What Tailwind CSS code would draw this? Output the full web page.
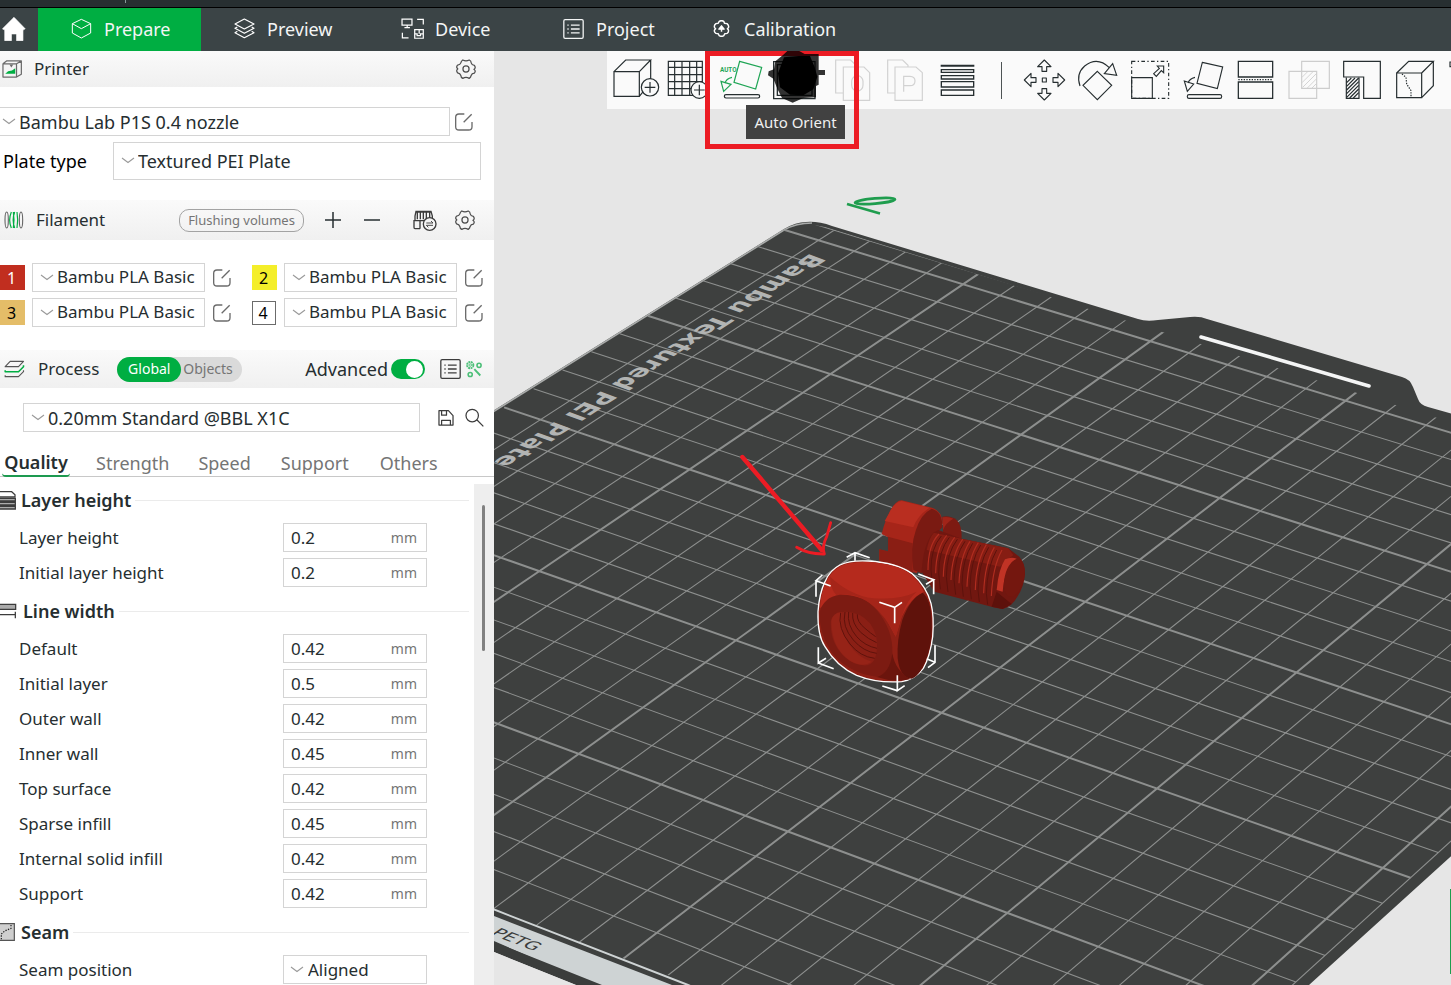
<!DOCTYPE html>
<html lang="en">
<head>
<meta charset="utf-8">
<meta name="viewport" content="width=device-width, initial-scale=1">
<title>Bambu Studio - Prepare</title>
<script src="https://cdn.jsdelivr.net/npm/@tailwindcss/browser@4"></script>
</head>
<body class="h-screen flex flex-col overflow-hidden bg-white font-['Noto_Sans',sans-serif] text-[17px] leading-6 text-[#262e30]">

<svg class="hidden" aria-hidden="true">
  <symbol id="chevron" viewBox="0 0 14 7"><path d="M1 1L7 5.5L13 1" fill="none" stroke="#999" stroke-width="1.1"/></symbol>
  <symbol id="edit" viewBox="0 0 54 54"><path d="M28 3H12Q2 3 2 13V41Q2 51 12 51H41Q51 51 51 41V27M26 28L50 4" fill="none" stroke="#6b6b6b" stroke-width="4"/></symbol>
  <symbol id="gear" viewBox="0 0 62 62"><path d="M21 3Q31 8 41 3Q47 5 47 12Q49 19 57 20Q62 27 57 31Q54 31 57 33Q62 38 57 44Q49 45 47 51Q46 57 41 60Q31 54 21 60Q15 57 15 51Q13 45 5 43Q0 37 4 32Q7 31 4 29Q0 24 5 19Q13 18 15 12Q16 6 21 3Z" fill="none" stroke="#4d4d4d" stroke-width="3.8" stroke-linejoin="round"/><circle cx="31" cy="31" r="9.500" fill="none" stroke="#4d4d4d" stroke-width="3.800"/></symbol>
  <symbol id="list" viewBox="0 0 64 62"><g fill="none" stroke="currentColor" stroke-width="4"><rect x="2" y="2" width="60" height="58" rx="4"/><path d="M24 19H51M24 31H51M24 43H51M13 19H17M13 31H17M13 43H17"/></g></symbol>
</svg>

<header class="shrink-0">
  <div class="h-2 bg-[#272f31] border-b border-black"><div class="ml-[125px] w-px h-[3px] bg-[#899]"></div></div>
  <nav class="h-[43px] bg-[#3b4446] flex text-[18px] text-[#f3f5f5]" aria-label="Main">
    <button class="w-[38px] flex items-center pl-0.5 pb-px" aria-label="Home">
      <svg class="w-6 h-6" viewBox="5 51 72 75"><path d="M41 52L76 88L69 92V125H49V104H33V125H12V92L5 88Z" fill="#fff" stroke="#fff" stroke-width="2" stroke-linejoin="round"/></svg>
    </button>
    <button class="w-[163px] pl-[33px] pb-0.5 flex items-center gap-3 bg-[#00ae42]">
      <svg class="size-[21px]" viewBox="213 57 63 63" fill="none" stroke="#fff" stroke-width="3" stroke-linejoin="round"><path d="M244 61L272 74V102L244 117L217 102V74ZM217 74L244 89L272 74"/></svg>Prepare
    </button>
    <button class="w-[167px] pl-[33px] pb-0.5 flex items-center gap-3">
      <svg class="size-[21px]" viewBox="702 57 63 63" fill="none" stroke="#fff" stroke-width="3.6" stroke-linejoin="round"><path d="M733 60L762 75L733 90L705 75ZM712 84L705 88L733 103L762 88L755 84M712 97L705 101L733 116L762 101L755 97"/></svg>Preview
    </button>
    <button class="w-[162px] pl-[33px] pb-0.5 flex items-center gap-2.5">
      <svg class="w-6 h-[22px]" viewBox="64 57 70 64" fill="none" stroke="#fff" stroke-width="3.6"><path d="M67 60H96V78H67ZM82 78V84M74 85H90M111 61H129V76M68 100V115H86M104 91H129V116H104ZM104 103H111V108H121V103H129M117 91V103"/></svg>Device
    </button>
    <button class="w-[150px] pl-[33px] pb-0.5 flex items-center gap-3">
      <svg class="w-[21px] h-5"><use href="#list"/></svg>Project
    </button>
    <button class="pl-[33px] pb-0.5 flex items-center gap-3.5">
      <svg class="w-[17px] h-[17px]" viewBox="999 62 50 52" fill="none" stroke="#fff" stroke-width="4.4" stroke-linejoin="round"><path d="M1017 66Q1024 62 1031 66L1033 72L1041 73Q1048 79 1045 86L1042 89L1045 92Q1047 100 1041 103L1034 104L1031 110Q1024 114 1017 110L1014 104L1007 103Q1000 98 1003 92L1006 89L1003 86Q1000 78 1007 73L1014 72Z"/><path d="M1024 98V84M1016 90L1024 80L1032 90Z" fill="#fff"/></svg>Calibration
    </button>
  </nav>
</header>

<div class="flex-1 min-h-0 flex">
  <aside class="w-[494px] shrink-0 flex flex-col overflow-hidden bg-white">

    <div class="h-9 shrink-0 flex items-center pl-0.5 pr-[18px] bg-linear-to-b from-[#fafafa] to-[#f0f0f0]">
      <svg class="w-5 h-[18px]" viewBox="5 180 62 54" fill="none" stroke="#6b6b6b" stroke-width="3.8" stroke-linejoin="round"><path d="M8 191H50V232H8ZM8 191L19 182H65L50 191M65 182V223L50 232"/><path d="M28 193H40L34 202Z" fill="#6b6b6b" stroke="none"/><path d="M15 222L24 214L36 212L46 205V222Z" fill="#00ae42" stroke="none"/></svg>
      <h2 class="ml-3">Printer</h2>
      <button class="ml-auto" aria-label="Printer settings"><svg class="size-5"><use href="#gear"/></svg></button>
    </div>

    <div class="pt-5 pb-5 shrink-0 text-[18px]">
      <div class="flex items-center">
        <div class="relative w-[450px]">
          <select aria-label="Printer preset" class="appearance-none block w-full h-[29px] border border-l-0 border-[#d4d4d4] bg-white pl-[19px]"><option>Bambu Lab P1S 0.4 nozzle</option></select>
          <svg class="absolute left-0.5 top-[11px] w-3.5 h-[7px] pointer-events-none"><use href="#chevron"/></svg>
        </div>
        <button class="ml-[5px]" aria-label="Edit printer preset"><svg class="size-[18px]"><use href="#edit"/></svg></button>
      </div>
      <div class="flex items-center mt-1.5 pl-[3px] pr-[13px]">
        <label for="plate" class="w-[110px] text-black">Plate type</label>
        <div class="relative flex-1">
          <select id="plate" class="appearance-none block w-full h-[38px] border border-[#d4d4d4] bg-white pl-6"><option>Textured PEI Plate</option></select>
          <svg class="absolute left-2 top-[15px] w-3.5 h-[7px] pointer-events-none"><use href="#chevron"/></svg>
        </div>
      </div>
    </div>

    <div class="h-10 shrink-0 flex items-center pl-1 pr-[19px] bg-linear-to-b from-[#fafafa] to-[#f0f0f0]">
      <svg class="w-5 h-[18px]" viewBox="12 46 60 54" fill="none"><g stroke="#00ae42" stroke-width="3.600"><path d="M34 49Q24 73 34 97M40 49Q44 73 40 97M44 49Q35 73 44 97M51 49Q55 73 51 97"/></g><g stroke="#666" stroke-width="3.400"><ellipse cx="20" cy="73" rx="5" ry="24"/><ellipse cx="63" cy="73" rx="5" ry="24"/></g></svg>
      <h2 class="ml-3">Filament</h2>
      <button class="ml-auto w-[125px] h-[23px] rounded-[10px] border border-[#a3a3a3] text-[13px] leading-5 text-[#757575]">Flushing volumes</button>
      <button class="ml-[21px]" aria-label="Add filament"><svg class="size-4" viewBox="0 0 16 16" stroke="#262e30" stroke-width="1.500"><path d="M0 8H16M8 0V16"/></svg></button>
      <button class="ml-[23px]" aria-label="Remove filament"><svg class="size-4" viewBox="0 0 16 16" stroke="#262e30" stroke-width="1.500"><path d="M0 8H16"/></svg></button>
      <button class="ml-[33px]" aria-label="Sync filaments"><svg class="w-6 h-[21px]" viewBox="1237 42 72 63" fill="none" stroke="#3c3c3c" stroke-width="4"><path d="M1258 98H1243Q1240 98 1240 94V74H1295V60L1291 46H1246L1243 60V74M1250 50V70M1259 50V70M1268 50V70M1277 50V70M1287 50V70M1247 48H1291M1258 74V98"/><circle cx="1287" cy="84" r="19" fill="#f5f5f5"/><path d="M1277 81H1297L1291 75M1297 88H1277L1283 94" stroke-width="2.800"/></svg></button>
      <button class="ml-[18px]" aria-label="Filament settings"><svg class="size-5"><use href="#gear"/></svg></button>
    </div>

    <div class="pt-[23px] pb-[23px] shrink-0 grid grid-cols-[252px_1fr] gap-y-1.5">
      <div class="flex items-center">
        <button class="size-[25px] pr-0.5 bg-[#c12e1f] text-white text-[16px] leading-6 text-center">1</button>
        <div class="relative ml-[7px] w-[173px]"><select aria-label="Filament 1" class="appearance-none block w-full h-[29px] border border-[#d4d4d4] bg-white pl-6 pb-0.5"><option>Bambu PLA Basic</option></select><svg class="absolute left-2 top-[11px] w-3.5 h-[7px] pointer-events-none"><use href="#chevron"/></svg></div>
        <button class="ml-2" aria-label="Edit filament 1"><svg class="size-[18px]"><use href="#edit"/></svg></button>
      </div>
      <div class="flex items-center">
        <button class="size-[25px] pr-0.5 bg-[#f4ee2a] text-black text-[16px] leading-6 text-center">2</button>
        <div class="relative ml-[7px] w-[173px]"><select aria-label="Filament 2" class="appearance-none block w-full h-[29px] border border-[#d4d4d4] bg-white pl-6 pb-0.5"><option>Bambu PLA Basic</option></select><svg class="absolute left-2 top-[11px] w-3.5 h-[7px] pointer-events-none"><use href="#chevron"/></svg></div>
        <button class="ml-2" aria-label="Edit filament 2"><svg class="size-[18px]"><use href="#edit"/></svg></button>
      </div>
      <div class="flex items-center">
        <button class="size-[25px] pr-0.5 bg-[#e4bd68] text-black text-[16px] leading-6 text-center">3</button>
        <div class="relative ml-[7px] w-[173px]"><select aria-label="Filament 3" class="appearance-none block w-full h-[29px] border border-[#d4d4d4] bg-white pl-6 pb-0.5"><option>Bambu PLA Basic</option></select><svg class="absolute left-2 top-[11px] w-3.5 h-[7px] pointer-events-none"><use href="#chevron"/></svg></div>
        <button class="ml-2" aria-label="Edit filament 3"><svg class="size-[18px]"><use href="#edit"/></svg></button>
      </div>
      <div class="flex items-center">
        <button class="w-6 h-6 mr-px pr-0.5 border border-[#6b6b6b] bg-white text-black text-[16px] leading-5 text-center">4</button>
        <div class="relative ml-[7px] w-[173px]"><select aria-label="Filament 4" class="appearance-none block w-full h-[29px] border border-[#d4d4d4] bg-white pl-6 pb-0.5"><option>Bambu PLA Basic</option></select><svg class="absolute left-2 top-[11px] w-3.5 h-[7px] pointer-events-none"><use href="#chevron"/></svg></div>
        <button class="ml-2" aria-label="Edit filament 4"><svg class="size-[18px]"><use href="#edit"/></svg></button>
      </div>
    </div>

    <div class="h-[38px] shrink-0 flex items-center pl-1 pr-[11px] bg-linear-to-b from-[#fafafa] to-[#f0f0f0]">
      <svg class="w-[21px] h-[18px]" viewBox="12 493 62 54" fill="none" stroke-width="3.400" stroke-linejoin="round"><path d="M30 497H70L55 513H15Z" stroke="#555"/><path d="M15 524V528H55L70 513V509" stroke="#00ae42" stroke-width="4.500"/><path d="M15 539V543H55L70 528V524" stroke="#555"/></svg>
      <h2 class="ml-[13px]">Process</h2>
      <div class="ml-[18px] h-[25px] w-[125px] flex rounded-full bg-[#dadada] text-[14px] leading-6">
        <button class="w-16 rounded-full bg-[#00ae42] text-white">Global</button>
        <button class="flex-1 text-left pl-0.5 text-[#757575]">Objects</button>
      </div>
      <label for="advanced" class="ml-auto text-[18px]">Advanced</label>
      <input id="advanced" type="checkbox" role="switch" checked class="ml-[3px] appearance-none w-[34px] h-5 rounded-full bg-[#a3a3a3] checked:bg-[#00ae42] flex items-center before:block before:size-[17px] before:rounded-full before:bg-white checked:before:ml-[15px]">
      <button class="ml-3.5 text-[#3c3c3c]" aria-label="Compare presets"><svg class="w-[23px] h-5"><use href="#list"/></svg></button>
      <button class="ml-[3px]" aria-label="Setup wizard"><svg class="size-[18px]" viewBox="1396 490 54 57" fill="none" stroke="#4cbf78"><circle cx="1411" cy="506" r="10" stroke-width="6" stroke-dasharray="6 2"/><circle cx="1411" cy="506" r="4" stroke-width="3"/><circle cx="1439" cy="507" r="6.500" stroke-width="5"/><circle cx="1411" cy="536" r="6.500" stroke-width="5"/><path d="M1424 519L1443 539" stroke-width="6"/></svg></button>
    </div>

    <div class="shrink-0 flex items-center pt-[15px] pl-[23px] pr-2.5">
      <div class="relative flex-1"><select aria-label="Process preset" class="appearance-none block w-full h-[29px] border border-[#d4d4d4] bg-white pl-6 text-[18px]"><option>0.20mm Standard @BBL X1C</option></select><svg class="absolute left-2 top-[11px] w-3.5 h-[7px] pointer-events-none"><use href="#chevron"/></svg></div>
      <button class="ml-[18px]" aria-label="Save preset"><svg class="size-4" viewBox="1314 58 49 49" fill="none" stroke="#3c3c3c" stroke-width="3.800" stroke-linejoin="round"><path d="M1317 60H1346L1360 75V104H1317ZM1325 61V74H1340V61M1325 103V90H1352V103"/></svg></button>
      <button class="ml-[11px]" aria-label="Search settings"><svg class="size-[19px]" viewBox="1394 53 58 58" fill="none" stroke="#3c3c3c" stroke-width="3.800"><circle cx="1416" cy="76" r="19"/><path d="M1430 89L1450 109"/></svg></button>
    </div>

    <div class="shrink-0 flex h-[45px] pt-[17px] border-b border-[#c8c8c8] text-[18px] text-[#757575]" role="tablist">
      <button role="tab" aria-selected="true" class="w-[68px] ml-0.5 h-7 border-b-2 border-[#1d9a50] rounded-sm font-semibold text-[#262e30] leading-[27px]">Quality</button>
      <button role="tab" class="ml-[26px] h-7">Strength</button>
      <button role="tab" class="ml-[29px] h-7">Speed</button>
      <button role="tab" class="ml-[30px] h-7">Support</button>
      <button role="tab" class="ml-[31px] h-7">Others</button>
    </div>

    <div class="flex-1 min-h-0 flex">
      <form class="flex-1 pt-[3px] overflow-hidden">
        <fieldset>
          <div class="h-10 flex items-center pr-[5px]">
            <svg class="w-4 h-[19px]" viewBox="0 303 48 57" fill="#ababab" stroke="#3c3c3c" stroke-width="3.800"><path d="M-4 305H35L45 314V321H-4Z" fill="#fff"/><path d="M-4 325H46V333H-4ZM-4 337H46V345H-4ZM-4 349H46V357H-4Z"/></svg>
            <h3 class="ml-[5px] font-semibold text-[18px]">Layer height</h3><div class="ml-1 flex-1 h-px bg-[#ebebeb]"></div>
          </div>
          <div class="h-[35px] flex items-center pl-[19px]"><label for="f1" class="w-[264px]">Layer height</label><div class="w-36 h-[29px] flex items-center border border-[#d4d4d4] pl-[7px] pr-[9px]"><input id="f1" class="flex-1 min-w-0 h-6 outline-none" value="0.2"><span class="text-[14px] text-[#757575]">mm</span></div></div>
          <div class="h-[35px] flex items-center pl-[19px]"><label for="f2" class="w-[264px]">Initial layer height</label><div class="w-36 h-[29px] flex items-center border border-[#d4d4d4] pl-[7px] pr-[9px]"><input id="f2" class="flex-1 min-w-0 h-6 outline-none" value="0.2"><span class="text-[14px] text-[#757575]">mm</span></div></div>
        </fieldset>
        <fieldset>
          <div class="h-[41px] flex items-center pt-px pr-[5px]">
            <svg class="w-[17px] h-4" viewBox="0 640 51 48" fill="#ababab" stroke="#3c3c3c" stroke-width="3.800"><path d="M-4 644H47V659H-4Z"/><path d="M-4 675H46M46 666V686" fill="none"/></svg>
            <h3 class="ml-1.5 font-semibold text-[18px]">Line width</h3><div class="ml-1 flex-1 h-px bg-[#ebebeb]"></div>
          </div>
          <div class="h-[35px] flex items-center pl-[19px]"><label for="f3" class="w-[264px]">Default</label><div class="w-36 h-[29px] flex items-center border border-[#d4d4d4] pl-[7px] pr-[9px]"><input id="f3" class="flex-1 min-w-0 h-6 outline-none" value="0.42"><span class="text-[14px] text-[#757575]">mm</span></div></div>
          <div class="h-[35px] flex items-center pl-[19px]"><label for="f4" class="w-[264px]">Initial layer</label><div class="w-36 h-[29px] flex items-center border border-[#d4d4d4] pl-[7px] pr-[9px]"><input id="f4" class="flex-1 min-w-0 h-6 outline-none" value="0.5"><span class="text-[14px] text-[#757575]">mm</span></div></div>
          <div class="h-[35px] flex items-center pl-[19px]"><label for="f5" class="w-[264px]">Outer wall</label><div class="w-36 h-[29px] flex items-center border border-[#d4d4d4] pl-[7px] pr-[9px]"><input id="f5" class="flex-1 min-w-0 h-6 outline-none" value="0.42"><span class="text-[14px] text-[#757575]">mm</span></div></div>
          <div class="h-[35px] flex items-center pl-[19px]"><label for="f6" class="w-[264px]">Inner wall</label><div class="w-36 h-[29px] flex items-center border border-[#d4d4d4] pl-[7px] pr-[9px]"><input id="f6" class="flex-1 min-w-0 h-6 outline-none" value="0.45"><span class="text-[14px] text-[#757575]">mm</span></div></div>
          <div class="h-[35px] flex items-center pl-[19px]"><label for="f7" class="w-[264px]">Top surface</label><div class="w-36 h-[29px] flex items-center border border-[#d4d4d4] pl-[7px] pr-[9px]"><input id="f7" class="flex-1 min-w-0 h-6 outline-none" value="0.42"><span class="text-[14px] text-[#757575]">mm</span></div></div>
          <div class="h-[35px] flex items-center pl-[19px]"><label for="f8" class="w-[264px]">Sparse infill</label><div class="w-36 h-[29px] flex items-center border border-[#d4d4d4] pl-[7px] pr-[9px]"><input id="f8" class="flex-1 min-w-0 h-6 outline-none" value="0.45"><span class="text-[14px] text-[#757575]">mm</span></div></div>
          <div class="h-[35px] flex items-center pl-[19px]"><label for="f9" class="w-[264px]">Internal solid infill</label><div class="w-36 h-[29px] flex items-center border border-[#d4d4d4] pl-[7px] pr-[9px]"><input id="f9" class="flex-1 min-w-0 h-6 outline-none" value="0.42"><span class="text-[14px] text-[#757575]">mm</span></div></div>
          <div class="h-[35px] flex items-center pl-[19px]"><label for="f10" class="w-[264px]">Support</label><div class="w-36 h-[29px] flex items-center border border-[#d4d4d4] pl-[7px] pr-[9px]"><input id="f10" class="flex-1 min-w-0 h-6 outline-none" value="0.42"><span class="text-[14px] text-[#757575]">mm</span></div></div>
        </fieldset>
        <fieldset>
          <div class="h-[41px] flex items-center pt-px pr-[5px]">
            <svg class="w-[15px] h-[18px]" viewBox="0 251 45 54" fill="#cfcfcf" stroke="#555" stroke-width="3.600"><path d="M-4 253H43V303H-4Z"/><path d="M4 300V284L14 275L33 267V254" fill="none" stroke="#222" stroke-dasharray="4 4"/></svg>
            <h3 class="ml-1.5 font-semibold text-[18px]">Seam</h3><div class="ml-1 flex-1 h-px bg-[#ebebeb]"></div>
          </div>
          <div class="h-[35px] flex items-center pl-[19px]"><label for="seam" class="w-[264px]">Seam position</label><div class="relative w-36"><select id="seam" class="appearance-none block w-full h-[29px] border border-[#d4d4d4] bg-white pl-6"><option>Aligned</option></select><svg class="absolute left-[7px] top-[11px] w-3.5 h-[7px] pointer-events-none"><use href="#chevron"/></svg></div></div>
        </fieldset>
      </form>
      <div class="w-5 mt-[7px] bg-[#eeeeee] pt-[21px] pl-2"><div class="w-[3px] h-[146px] rounded-full bg-[#808080]"></div></div>
    </div>
  </aside>

  <main class="relative flex-1 min-w-0 overflow-hidden bg-[#e6e6e6]">
    <svg class="absolute inset-0 w-full h-full" viewBox="494 51 957 934" preserveAspectRatio="xMinYMin slice" role="img" aria-label="Build plate with a nut and a bolt">
      <path fill="#3e403f" d="M480 419L784 229Q796 222 806 222Q818 221 832 226L1138 319Q1146 322 1158 320L1190 317Q1200 316 1207 319L1402 377Q1410 379 1413 387L1418 399Q1420 405 1428 407L1460 416V848L1309 985L1290 1010H640L480 945Z"/>
      <path d="M480 420L784 230Q796 223 812 223" fill="none" stroke="#a9abaa" stroke-width="1.500"/>
      <path d="M1201 337L1369 386" stroke="#f4f5f5" stroke-width="3.600" stroke-linecap="round"/>
      <clipPath id="bed"><path d="M480 420L784 230Q800 222 826 227L1460 425V860L1300 1000H735L480 905Z"/></clipPath>
      <g clip-path="url(#bed)" fill="none" stroke="#8d8f8e">
        <path id="grid-minor" stroke-width="1.100"/>
        <path id="grid-major" stroke-width="2"/>
      </g>
      <path d="M480 910.500L494 916L672 985L690 992H610L494 941L480 936Z" fill="#ced3d4"/>
      <path d="M480 935L494 942L602 985L620 993H590L576 985L494 952L480 947Z" fill="#3b3d3c"/>
      <path d="M480 946L494 952L576 985L590 992H480Z" fill="#e6e6e6"/>
      <path d="M480 904L494 909.500L688 985L710 994" fill="none" stroke="#ced3d4" stroke-width="2"/>
      <text transform="matrix(-.84 .553 -.88 -.32 811 253)" font-family="DejaVu Sans" font-weight="bold" font-size="26" fill="#b2b4b3">Bambu Textured PEI Plate</text>
      <text transform="matrix(.94 .36 -.75 .5 490 934)" font-family="DejaVu Sans" font-size="18" fill="#3b3d3c">PETG</text>

      <g fill="none" stroke="#1f9d4e"><path d="M847 204L880 213.500" stroke-width="2.600"/><ellipse cx="875" cy="201" rx="20" ry="2.600" transform="rotate(-5 875 201)" stroke-width="2.800"/></g>
      <path d="M1450.500 889V974" stroke="#1f9d4e" stroke-width="1"/>

      <g transform="translate(730 440) scale(.33333)">
        <!-- bolt -->
        <path fill="#7d1a12" d="M637 230Q660 226 680 240Q696 255 695 295L640 290Z"/>
        <path fill="#a12419" d="M637 232Q655 228 670 236Q645 250 640 270Z"/>
        <path fill="#a62519" d="M455 282Q465 240 482 210Q498 181 515 181L606 203Q636 213 638 250L560 400L448 362V328L474 335V292Z"/>
        <path fill="#b92e20" d="M476 222Q492 186 515 183L598 203Q560 230 550 262L464 243Z"/>
        <path fill="#8a1e14" d="M448 328L548 350V400L448 364ZM474 290L548 310V352L474 336Z"/>
        <path fill="#7a1a12" d="M605 206Q638 214 637 262L600 300L575 400L550 390Q540 320 557 272Q572 222 605 206Z"/>
        <path fill="#711710" d="M610 278L625 270L695 296L835 325L868 350Q885 370 885 402Q882 440 862 470Q846 500 818 507L790 502L613 455L575 395Q580 310 610 278Z"/>
        <path fill="#861d13" d="M612 278L695 296L835 325L850 345L810 380L590 330Q598 290 612 278Z"/>
        <g fill="none" stroke="#b02d20" stroke-width="3.500"><path d="M627 282Q594 315 594 390"/><path d="M650 286Q618 325 617 400"/><path d="M674 292Q641 335 640 410"/><path d="M698 298Q666 340 663 420"/><path d="M720 304Q690 350 687 430"/><path d="M745 308Q714 355 711 440"/><path d="M769 314Q738 365 736 450"/><path d="M793 322Q764 370 761 460"/><path d="M816 330Q788 380 784 468"/></g>
        <g fill="none" stroke="#5b120c" stroke-width="3"><path d="M634 288Q602 325 603 390L608 440M658 292Q626 332 626 400L631 448M682 298Q650 340 649 410L654 456M705 304Q674 348 672 420L677 464M728 310Q698 356 696 430L700 470M752 315Q722 362 720 440L724 478M776 322Q746 370 744 450L748 486M800 330Q772 378 769 460L773 494"/></g>
        <path fill="#c03325" d="M825 358Q844 350 860 356Q822 390 818 455L800 450Q805 390 825 358Z"/>
        <ellipse cx="853" cy="414" rx="29" ry="58" transform="rotate(14 853 414)" fill="#74170f"/>
        <path fill="#5d110b" d="M800 455L830 480L845 492L818 507L785 500Z"/>
        <!-- nut -->
        <path fill="#8e2015" stroke="#fff" stroke-width="4" d="M330 375Q360 360 415 363Q500 368 545 400Q590 440 603 490Q613 530 608 590Q600 650 580 685Q555 718 515 725Q440 730 380 706Q320 680 285 620Q262 585 264 515Q268 460 285 425Q300 390 330 375Z"/>
        <path fill="#b52a1d" d="M332 378Q360 364 415 366Q500 371 543 403Q570 428 582 455Q540 475 515 530L497 590L470 540Q430 480 365 468Q310 460 270 505Q272 460 288 427Q304 392 332 378Z"/>
        <path fill="#a52519" d="M300 410Q302 450 320 466Q375 455 420 490Q470 530 497 590L515 530Q530 480 560 455Q510 480 430 475Q360 466 300 410Z"/>
        <path fill="#7c1b12" d="M268 520Q280 470 330 464Q400 462 440 510Q490 570 487 640Q485 700 440 710Q370 702 320 655Q270 600 268 520Z"/>
        <path fill="#5f120b" d="M578 458Q602 478 605 540Q608 600 594 642Q575 705 545 716Q510 715 503 655Q500 600 517 540Q540 475 578 458Z"/>
        <path fill="#6b150d" d="M487 640Q495 690 540 718Q490 728 440 711Q480 700 487 640Z"/>
        <path fill="#8a1f15" d="M302 545Q305 518 345 515Q390 515 420 550Q445 585 441 625Q438 670 412 676Q360 680 322 625Q300 590 302 545Z"/>
        <path fill="#962317" d="M304 545Q307 518 335 516Q325 560 355 610Q385 655 425 665Q400 685 360 662Q305 625 304 545Z"/>
        <g fill="none" stroke="#5f120b" stroke-width="3"><path d="M345 516Q335 560 370 600Q400 635 440 640"/><path d="M356 516Q350 555 380 590Q405 618 441 625"/><path d="M368 519Q365 550 392 577Q415 598 440 608"/><path d="M332 518Q322 565 360 612Q390 650 434 655"/><path d="M382 523Q380 545 405 565Q422 580 437 590"/></g>
        <!-- selection corners -->
        <g fill="none" stroke="#fff" stroke-width="5"><path d="M375 362V338M350 352L375 338L419 353"/><path d="M258 470V422M277 405L258 422L302 438"/><path d="M611 463V419M565 402L599 415L611 419L588 433"/><path d="M494 550V502M448 487L494 502L516 487"/><path d="M265 622V669L288 655M265 669L311 686"/><path d="M615 616V667L594 683M615 667L590 656"/><path d="M502 706V752L524 737M502 752L457 738"/></g>
        <!-- arrow annotation -->
        <g fill="none" stroke="#ec1c24" stroke-linecap="round" stroke-linejoin="round"><path d="M37 51L100 125L275 330" stroke-width="13"/><path d="M200 322Q235 343 283 342Q275 320 290 290L302 248" stroke-width="8.500"/></g>
      </g>
    </svg>

    <div class="relative ml-[113px] h-[58px] bg-[#fafafa] flex items-center overflow-hidden pl-0.5" role="toolbar" aria-label="Plate tools">
      <button class="w-[53px] shrink-0" aria-label="Add model"><svg class="w-[53px] h-[58px] overflow-visible" viewBox="27 3 159 174" fill="none" stroke="#262e30" stroke-width="3.600"><path d="M42 65H118V139H42ZM42 65L77 30H152L118 65M152 30V86M118 139L130 124"/><circle cx="150" cy="112" r="26" fill="#fafafa"/><path d="M134 112H166M150 96V128"/></svg></button>
      <button class="w-[53px] shrink-0" aria-label="Add plate"><svg class="w-[53px] h-[58px] overflow-visible" viewBox="186 3 159 174" fill="none" stroke="#262e30" stroke-width="3.600"><path d="M205 34H307V136H205ZM224 34V136M246 34V136M269 34V136M290 34V136M205 52H307M205 74H307M205 95H307M205 116H307"/><circle cx="298" cy="120" r="25" fill="#fafafa"/><path d="M282 120H314M298 104V136"/></svg></button>
      <button class="w-[53px] shrink-0" aria-label="Auto orient"><svg class="w-[53px] h-[58px] overflow-visible" viewBox="345 3 159 174" fill="none" stroke="#1fa555" stroke-width="3.600"><path d="M419 34L485 52L467 117L402 97ZM396 82Q378 86 375 100M363 94L393 103L371 124Z"/><rect x="373" y="134" width="106" height="10" rx="5" stroke="#262e30"/><text x="360" y="67" font-family="Roboto" font-weight="bold" font-size="19" fill="#1fa555" stroke="none">AUTO</text></svg></button>
      <button class="w-[53px] shrink-0" aria-label="Arrange"><svg class="w-[53px] h-[58px] overflow-visible" viewBox="504 3 159 174" fill="none" stroke="#262e30" stroke-width="4"><path d="M521 35H645V146H521ZM532 44H636V136H532Z"/></svg></button>
      <button class="w-[53px] shrink-0" aria-label="Split to objects" disabled><svg class="w-[53px] h-[58px] overflow-visible" viewBox="663 3 159 174" fill="none" stroke="#d2d2d2" stroke-width="3.600"><path d="M730 129H707V30H752L768 46V50M730 51H792L809 68V151H730Z"/><rect x="755" y="77" width="34" height="46" rx="17"/></svg></button>
      <button class="w-[53px] shrink-0" aria-label="Split to parts" disabled><svg class="w-[53px] h-[58px] overflow-visible" viewBox="822 3 159 174" fill="none" stroke="#d2d2d2" stroke-width="3.600"><path d="M885 129H863V30H908L924 46V50M885 51H948L967 68V151H885ZM911 125V79H930Q945 80 945 92Q945 107 930 107H911"/></svg></button>
      <button class="w-[53px] shrink-0" aria-label="Variable layer height"><svg class="w-[53px] h-[58px] overflow-visible" viewBox="981 3 159 174" fill="none" stroke="#262e30" stroke-width="4"><path d="M1022 47H1123" stroke-width="6"/><path d="M1024 59H1121V67H1024ZM1024 77H1121V87H1024ZM1024 95H1121V111H1024ZM1024 120H1121V136H1024Z"/></svg></button>
      <div class="ml-[21px] mr-4 w-px h-[37px] shrink-0 bg-[#4d5354]"></div>
      <button class="w-[53px] shrink-0" aria-label="Move"><svg class="w-[53px] h-[58px] overflow-visible" viewBox="24 3 159 174" fill="none" stroke="#262e30" stroke-width="3.400" stroke-linejoin="round"><path d="M103 30L123 50H110V64H96V50H83ZM103 150L83 130H96V116H110V130H123ZM43 90L63 70V83H78V97H63V110ZM164 90L144 110V97H129V83H144V70ZM97 84H109V96H97Z"/></svg></button>
      <button class="w-[53px] shrink-0" aria-label="Rotate"><svg class="w-[53px] h-[58px] overflow-visible" viewBox="183 3 159 174" fill="none" stroke="#262e30" stroke-width="3.400"><path d="M262 64L305 106L262 149L219 106ZM210 108Q197 72 224 48Q262 18 298 53M283 71L308 41L320 76Z"/></svg></button>
      <button class="w-[53px] shrink-0" aria-label="Scale"><svg class="w-[53px] h-[58px] overflow-visible" viewBox="342 3 159 174" fill="none" stroke="#262e30" stroke-width="3.400"><path d="M365 34H476V145H365Z" stroke-dasharray="11 7 4 7"/><path d="M365 83H427V145H365ZM442 48H461V68L454 62L439 79L431 71L448 55Z"/></svg></button>
      <button class="w-[53px] shrink-0" aria-label="Lay on face"><svg class="w-[53px] h-[58px] overflow-visible" viewBox="501 3 159 174" fill="none" stroke="#262e30" stroke-width="3.400"><path d="M577 37L638 51L622 116L561 100ZM555 82Q538 86 534 99M523 93L551 102L532 124Z"/><rect x="532" y="134" width="103" height="11" rx="5"/></svg></button>
      <button class="w-[53px] shrink-0" aria-label="Cut"><svg class="w-[53px] h-[58px] overflow-visible" viewBox="660 3 159 174" fill="none" stroke="#262e30" stroke-width="3.800"><path d="M685 34H788V81H685ZM685 96H788V145H685Z"/><path d="M685 89H788" stroke-dasharray="4 4"/></svg></button>
      <button class="w-[53px] shrink-0" aria-label="Mesh boolean" disabled><svg class="w-[53px] h-[58px] overflow-visible" viewBox="819 3 159 174" fill="none" stroke="#cdcdcd" stroke-width="3.600"><path d="M875 34H958V115H875ZM837 64H920V145H837Z"/><path d="M876 82L892 66M876 98L908 66M878 112L919 71M892 114L919 87M906 114L919 101" stroke-width="2.500"/></svg></button>
      <button class="w-[53px] shrink-0" aria-label="Support painting"><svg class="w-[53px] h-[58px] overflow-visible" viewBox="978 3 159 174" fill="none" stroke="#262e30" stroke-width="3.600"><path d="M1001 34H1111V145H1061V81H1001ZM1009 83V145H1047V83"/><path d="M1010 98L1024 84M1010 109L1035 84M1010 120L1046 84M1010 131L1046 95M1010 142L1046 106M1019 144L1046 117M1030 144L1046 128"/></svg></button>
      <button class="w-[53px] shrink-0" aria-label="Seam painting"><svg class="w-[53px] h-[58px] overflow-visible" viewBox="1137 3 159 174" fill="none" stroke="#262e30" stroke-width="3.600"><path d="M1160 69H1235V143H1160ZM1160 69L1196 34H1270L1235 69M1270 34V107L1235 143"/><path d="M1176 72L1188 82L1190 102L1203 122V142" stroke-dasharray="4 4"/></svg></button>
      <button class="w-[53px] shrink-0" aria-label="Text tool"><svg class="w-[53px] h-[58px] overflow-visible" viewBox="1296 3 159 174" fill="none" stroke="#262e30" stroke-width="3.600"><path d="M1400 36H1320V50H1400"/></svg></button>
    </div>

    <div class="absolute left-[211px] top-0 w-[154px] h-[98px] border-5 border-[#ec1c24] pointer-events-none"></div>
    <!-- scribble over the arrange button -->
    <svg class="absolute left-[273px] top-0 w-[62px] h-[52px] pointer-events-none" viewBox="501 3 186 156" aria-hidden="true"><path fill="#000" fill-opacity=".8" d="M562 3L596 2L614 12L656 12V60H675V75H656V104L648 108V142L610 144L578 158L546 144L532 116L520 86L504 76L506 64L522 58L526 34L550 14Z"/><path fill="#000" d="M552 22L596 18L630 18L644 52L652 80L640 118L610 136L570 134L540 112L534 70Z"/></svg>
    <div role="tooltip" class="absolute left-[252px] top-[54px] w-[99px] h-[34px] bg-[#414141] text-[#f0f0f0] text-[15px] leading-[34px] text-center">Auto Orient</div>
  </main>
</div>

<script>
// Plate coordinates (10 mm cells) paired with their projected screen positions.
const anchors = [
  [0,0,963,284.3],[5,0,1150.7,341],[10,0,1346,400.7],[0,5,830,373.3],[5,5,1020,435],
  [10,5,1219.3,498.3],[15,5,1426.7,564],[0,10,689,469.3],[-5,0,784,230],[-5,10,504,407.3],
  [5,20,579,754],[10,20,788.3,831.7],[15,20,1007.3,912.7],[15,15,1157.3,789],[20,15,1382.7,867.7]
];
// Least-squares fit of the projective transform.
const M = Array.from({length: 8}, () => Array(9).fill(0));
for (const [u, v, x, y] of anchors) {
  for (const r of [[u,v,1,0,0,0,-x*u,-x*v,x],[0,0,0,u,v,1,-y*u,-y*v,y]]) {
    for (let i = 0; i < 8; i++) for (let j = 0; j < 9; j++) M[i][j] += r[i] * r[j];
  }
}
for (let i = 0; i < 8; i++) {
  let p = i;
  for (let k = i + 1; k < 8; k++) if (Math.abs(M[k][i]) > Math.abs(M[p][i])) p = k;
  [M[i], M[p]] = [M[p], M[i]];
  for (let k = 0; k < 8; k++) {
    if (k === i) continue;
    const f = M[k][i] / M[i][i];
    for (let j = i; j < 9; j++) M[k][j] -= f * M[i][j];
  }
}
const h = M.map((row, i) => row[8] / row[i]);
const project = (u, v) => {
  const w = h[6]*u + h[7]*v + 1;
  return ((h[0]*u + h[1]*v + h[2]) / w).toFixed(1) + ' ' + ((h[3]*u + h[4]*v + h[5]) / w).toFixed(1);
};
const line = (a, b, c, d) => 'M' + project(a, b) + 'L' + project(c, d);
let minor = line(-5, -0.6, 20.6, -0.6) + line(20.6, -0.6, 20.6, 25), major = '';
for (let u = -4; u <= 20; u++) { const s = line(u, -0.6, u, 25); if (u % 5) minor += s; else major += s; }
for (let v = 0; v < 25; v++) { const s = line(-5, v, 20.6, v); if (v % 5) minor += s; else major += s; }
document.getElementById('grid-minor').setAttribute('d', minor);
document.getElementById('grid-major').setAttribute('d', major);
</script>
</body>
</html>
